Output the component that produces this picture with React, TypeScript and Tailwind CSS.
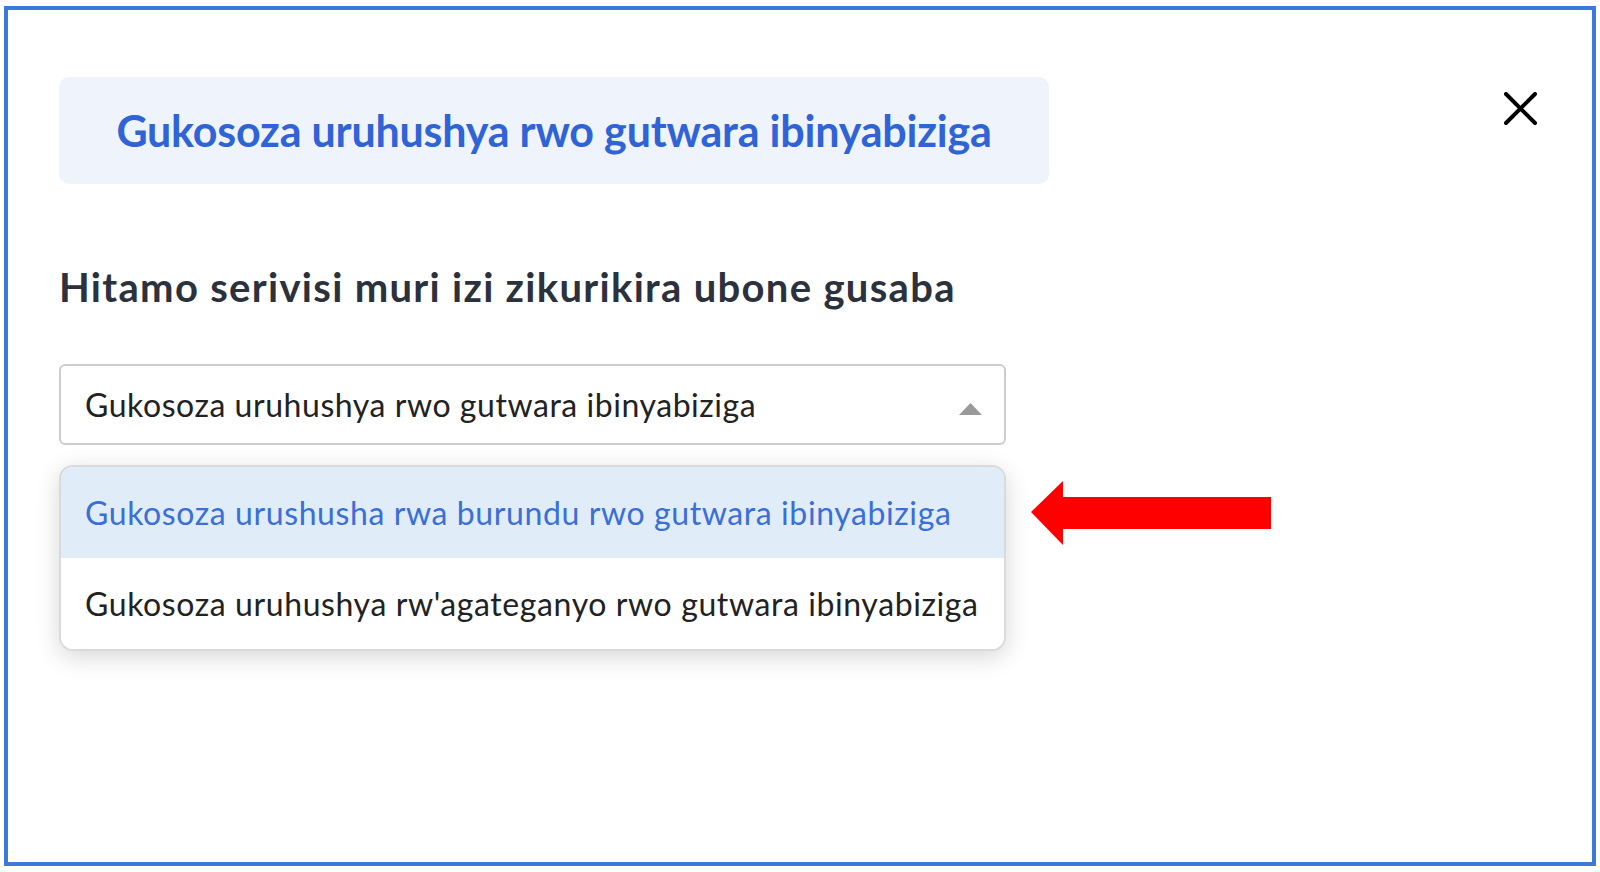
const options = [
  { id: 1, label: 'Gukosoza urushusha rwa burundu rwo gutwara ibinyabiziga', active: true },
  { id: 2, label: "Gukosoza uruhushya rw'agateganyo rwo gutwara ibinyabiziga", active: false },
];

export default function App() {
  return (
    <div className="w-[1600px] h-[872px] bg-white pl-[4px] pt-[6px] font-['Lato',sans-serif]">
      <div className="w-[1592px] h-[860px] border-4 border-[#3b7ad9] bg-white pl-[51px] pt-[67px] flex">
        <div className="w-[990px] flex flex-col">
          {/* Modal title */}
          <div className="h-[107px] rounded-[10px] bg-[#eef3fc] flex items-center justify-center">
            <h1 className="text-[43px] font-bold text-[#2f63d6] leading-none tracking-[-0.2px]">
              Gukosoza uruhushya rwo gutwara ibinyabiziga
            </h1>
          </div>

          <h2 className="mt-[83px] text-[40px] font-bold text-[#2b313d] leading-none tracking-[1.3px]">
            Hitamo serivisi muri izi zikurikira ubone gusaba
          </h2>

          {/* Select */}
          <div className="mt-[57px] w-[947px] h-[81px] rounded-[6px] border-2 border-[#cdcdcd] flex items-center justify-between pl-[24px] pr-[22px]">
            <span className="text-[32px] text-[#222222] leading-none tracking-[0.55px]">
              Gukosoza uruhushya rwo gutwara ibinyabiziga
            </span>
            <svg width="23" height="12" viewBox="0 0 23 12" className="mt-[8px]">
              <polygon points="11.5,0 23,12 0,12" fill="#9a9a9a" />
            </svg>
          </div>

          <div className="relative mt-[20px] w-[947px]">
            <div className="rounded-[14px] border-2 border-[#dadada] bg-white overflow-hidden shadow-[0_6px_24px_rgba(0,0,0,0.16)]">
              {options.map((o) => (
                <div
                  key={o.id}
                  className={
                    o.active
                      ? 'h-[91px] flex items-center pl-[24px] bg-[#e1ecf9] text-[#3a6fd8] text-[32px] tracking-[0.6px]'
                      : 'h-[91px] flex items-center pl-[24px] bg-white text-[#222222] text-[32px] tracking-[0.6px]'
                  }
                >
                  {o.label}
                </div>
              ))}
            </div>

            {/* Red pointer arrow */}
            <svg
              className="absolute left-[972px] top-[16px]"
              width="240"
              height="66"
              viewBox="0 0 240 66"
            >
              <polygon points="0,31 32,0 32,16 240,16 240,48 32,48 32,64" fill="#ff0000" />
            </svg>
          </div>
        </div>

        {/* Close button */}
        <button className="ml-[455px] mt-[15px] h-[33px] w-[33px]">
          <svg width="33" height="33" viewBox="0 0 33 33">
            <path d="M2 2 L31 31 M31 2 L2 31" stroke="#000" strokeWidth="4" strokeLinecap="round" />
          </svg>
        </button>
      </div>
    </div>
  );
}
